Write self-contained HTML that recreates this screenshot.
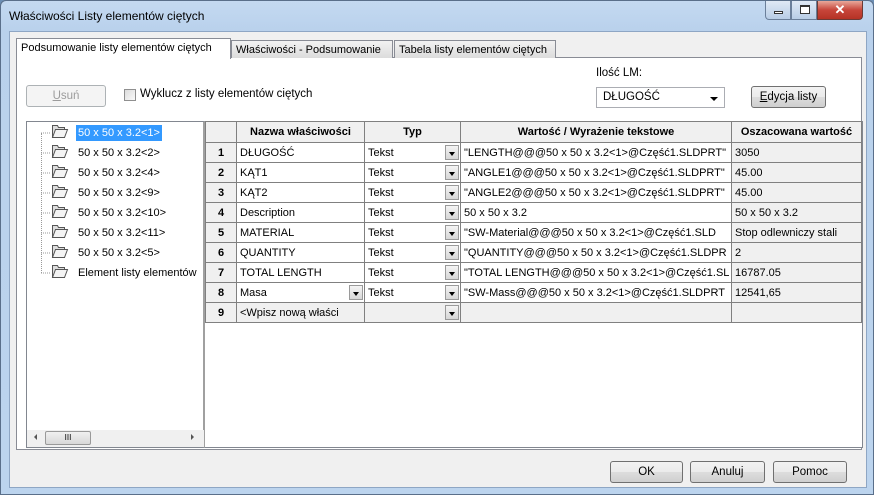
<!DOCTYPE html>
<html><head><meta charset="utf-8"><style>
*{box-sizing:border-box;margin:0;padding:0}
body{width:874px;height:495px;overflow:hidden;background:#6d8fb5;font-family:"Liberation Sans",sans-serif;font-size:11px;color:#000;position:relative}
.win{position:absolute;left:0;top:0;width:874px;height:495px;border-radius:6px 6px 0 0;background:linear-gradient(#c4d9f1,#b9d1ec 30px,#bcd4ee);border:1px solid #5a6f8a}
.abs{position:absolute}
.client{position:absolute;left:8px;top:30px;width:858px;height:457px;background:#f0f0f0;border:1px solid #8ea6c4}
.tab{position:absolute;top:39px;height:18px;background:linear-gradient(#f2f2f2,#dcdcdc);border:1px solid #898c95;border-bottom:none;font-size:11px;padding:3px 4px 0;white-space:nowrap;overflow:hidden}
.btn{position:absolute;height:22px;border:1px solid #707070;border-radius:3px;background:linear-gradient(#f2f2f2 0,#ebebeb 50%,#dddddd 51%,#cfcfcf);text-align:center;font-size:11.5px;line-height:20px}
table{border-collapse:collapse;position:absolute;left:204px;top:120px;table-layout:fixed;width:656px}
td{border:1px solid #808080;height:20px;padding:0 3px;white-space:nowrap;overflow:hidden;font-size:11px;position:relative}
tr.h td{background:#f0f0f0;font-weight:bold;text-align:center;height:21px}
td.n{background:#f0f0f0;font-weight:bold;text-align:center}
td.g{background:#f0f0f0}
.dd{position:absolute;right:1px;top:2px;width:14px;height:15px;background:linear-gradient(#f4f4f4,#d6d6d6);border:1px solid #9a9a9a}
.dd:after{content:"";position:absolute;left:3px;top:6px;border:3.5px solid transparent;border-top:4px solid #000}
.tree div{position:absolute;left:75px;font-size:11px;height:16px;line-height:16px;padding:0 2px;white-space:nowrap}
</style></head><body>
<div class="win">
<div class="abs" style="left:8px;top:8px;font-size:12px">Właściwości Listy elementów ciętych</div>
<div class="abs" style="left:764px;top:0;width:26px;height:19px;border:1px solid #6b7f9a;border-top:none;border-radius:0 0 0 4px;background:linear-gradient(#dfe9f5,#b8cde6)"><div class="abs" style="left:8px;top:10px;width:9px;height:3px;border:1px solid #333;background:#fff"></div></div>
<div class="abs" style="left:790px;top:0;width:26px;height:19px;border:1px solid #6b7f9a;border-top:none;background:linear-gradient(#dfe9f5,#b8cde6)"><div class="abs" style="left:8px;top:4px;width:10px;height:9px;border:1px solid #333;border-top-width:2px;background:#fff"></div></div>
<div class="abs" style="left:816px;top:0;width:46px;height:19px;border:1px solid #6b3a36;border-top:none;border-radius:0 0 4px 0;background:linear-gradient(#e8a89a,#c7453a 50%,#b53225);color:#fff;font-weight:bold;text-align:center;font-size:13px;line-height:17px">✕</div>
<div class="client"></div>
<div class="abs" style="left:15px;top:56px;width:846px;height:393px;background:#fff;border:1px solid #898c95"></div>
<div class="tab" style="left:230px;width:162px">Właściwości - Podsumowanie</div>
<div class="tab" style="left:393px;width:162px">Tabela listy elementów ciętych</div>
<div class="tab" style="left:15px;top:37px;height:21px;width:215px;background:#fff;padding-top:3px">Podsumowanie listy elementów ciętych</div>
<div class="btn" style="left:25px;top:84px;width:80px;border-color:#adb2b5;background:#f4f4f4;color:#9c9c9c"><u>U</u>suń</div>
<div class="abs" style="left:123px;top:88px;width:12px;height:12px;border:1px solid #8f8f8f;background:linear-gradient(135deg,#dcdcdc,#fafafa)"></div>
<div class="abs" style="left:139px;top:87px;font-size:11.5px">Wyklucz z listy elementów ciętych</div>
<div class="abs" style="left:595px;top:66px;font-size:11.5px">Ilość LM:</div>
<div class="abs" style="left:595px;top:86px;width:129px;height:21px;border:1px solid #abadb3;background:#fff;font-size:11.5px;padding:3px 0 0 6px">DŁUGOŚĆ<div class="abs" style="right:6px;top:9px;border:4px solid transparent;border-top:4px solid #000"></div></div>
<div class="btn" style="left:750px;top:85px;width:75px"><u>E</u>dycja listy</div>
<div class="abs" style="left:25px;top:120px;width:179px;height:327px;border:1px solid #828790;border-right:2px solid #a0a0a0;background:#fff"></div>
<div class="abs" style="left:40px;top:132px;height:140px;border-left:1px dotted #999"></div>
<div class="tree">
<div style="top:124px;background:#3399ff;color:#fff">50 x 50 x 3.2&lt;1&gt;</div>
<div style="top:144px">50 x 50 x 3.2&lt;2&gt;</div>
<div style="top:164px">50 x 50 x 3.2&lt;4&gt;</div>
<div style="top:184px">50 x 50 x 3.2&lt;9&gt;</div>
<div style="top:204px">50 x 50 x 3.2&lt;10&gt;</div>
<div style="top:224px">50 x 50 x 3.2&lt;11&gt;</div>
<div style="top:244px">50 x 50 x 3.2&lt;5&gt;</div>
<div style="top:264px">Element listy elementów</div>
</div>
<svg class="abs" style="left:40px;top:120px" width="40" height="170">
<g fill="#f4f4f4" stroke="#555" stroke-width="1">
<g id="f"><line x1="0" y1="12" x2="10" y2="12" stroke="#999" stroke-dasharray="1,1"/><path d="M11.5 4.5h5l1 2h6v10h-12z" fill="#ddd"/><path d="M11.5 16.5l3-8h12l-3 8z"/></g>
<use href="#f" y="20"/><use href="#f" y="40"/><use href="#f" y="60"/><use href="#f" y="80"/><use href="#f" y="100"/><use href="#f" y="120"/><use href="#f" y="140"/>
</g></svg>
<div class="abs" style="left:26px;top:429px;width:177px;height:17px;background:#f0f0f0"></div>
<div class="abs" style="left:44px;top:430px;width:46px;height:14px;border:1px solid #999;border-radius:2px;background:linear-gradient(#f0f0f0,#d8d8d8);text-align:center;font-size:8px;line-height:12px">III</div>
<div class="abs" style="left:30px;top:433px;border:3px solid transparent;border-right:3px solid #555"></div>
<div class="abs" style="left:190px;top:433px;border:3px solid transparent;border-left:3px solid #555"></div>
<div class="abs" style="left:204px;top:120px;width:658px;height:327px;border:1px solid #828790;border-left:none;background:#fff"></div>
<table>
<colgroup><col style="width:31px"><col style="width:128px"><col style="width:96px"><col style="width:271px"><col style="width:130px"></colgroup>
<tr class="h"><td></td><td>Nazwa właściwości</td><td>Typ</td><td>Wartość / Wyrażenie tekstowe</td><td>Oszacowana wartość</td></tr>
<tr><td class="n">1</td><td>DŁUGOŚĆ</td><td>Tekst<span class="dd"></span></td><td>"LENGTH@@@50 x 50 x 3.2&lt;1&gt;@Część1.SLDPRT"</td><td class="g">3050</td></tr>
<tr><td class="n">2</td><td>KĄT1</td><td>Tekst<span class="dd"></span></td><td>"ANGLE1@@@50 x 50 x 3.2&lt;1&gt;@Część1.SLDPRT"</td><td class="g">45.00</td></tr>
<tr><td class="n">3</td><td>KĄT2</td><td>Tekst<span class="dd"></span></td><td>"ANGLE2@@@50 x 50 x 3.2&lt;1&gt;@Część1.SLDPRT"</td><td class="g">45.00</td></tr>
<tr><td class="n">4</td><td>Description</td><td>Tekst<span class="dd"></span></td><td>50 x 50 x 3.2</td><td class="g">50 x 50 x 3.2</td></tr>
<tr><td class="n">5</td><td>MATERIAL</td><td>Tekst<span class="dd"></span></td><td>"SW-Material@@@50 x 50 x 3.2&lt;1&gt;@Część1.SLD</td><td class="g">Stop odlewniczy stali</td></tr>
<tr><td class="n">6</td><td>QUANTITY</td><td>Tekst<span class="dd"></span></td><td>"QUANTITY@@@50 x 50 x 3.2&lt;1&gt;@Część1.SLDPR</td><td class="g">2</td></tr>
<tr><td class="n">7</td><td>TOTAL LENGTH</td><td>Tekst<span class="dd"></span></td><td>"TOTAL LENGTH@@@50 x 50 x 3.2&lt;1&gt;@Część1.SL</td><td class="g">16787.05</td></tr>
<tr><td class="n">8</td><td>Masa<span class="dd"></span></td><td>Tekst<span class="dd"></span></td><td>"SW-Mass@@@50 x 50 x 3.2&lt;1&gt;@Część1.SLDPRT</td><td class="g">12541,65</td></tr>
<tr><td class="n">9</td><td class="g">&lt;Wpisz nową właści</td><td class="g"><span class="dd"></span></td><td class="g"></td><td class="g"></td></tr>
</table>
<div class="btn" style="left:609px;top:460px;width:73px">OK</div>
<div class="btn" style="left:689px;top:460px;width:75px">Anuluj</div>
<div class="btn" style="left:772px;top:460px;width:74px">Pomoc</div>
</div>
</body></html>
